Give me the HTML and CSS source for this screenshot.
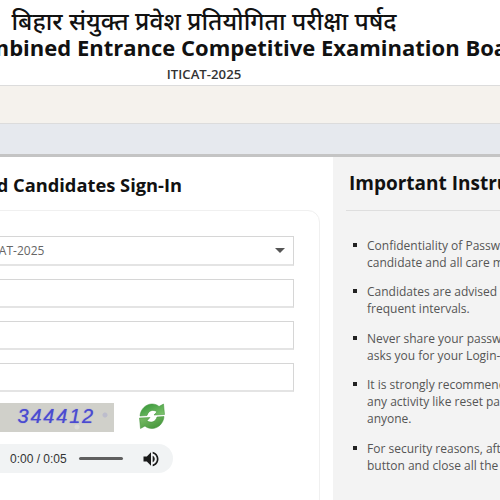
FILE: index.html
```html
<!DOCTYPE html>
<html lang="en">
<head>
    <meta charset="UTF-8">
    <meta name="viewport" content="width=device-width, initial-scale=1.0">
    <title>ITICAT-2025 Sign-In</title>
    <link rel="stylesheet" href="styles.css">
</head>
<body>
    <div class="page">
        <header class="header">
            <h1 class="title-hi">बिहार संयुक्त प्रवेश प्रतियोगिता परीक्षा पर्षद</h1>
            <h2 class="title-en">Bihar Combined Entrance Competitive Examination Board</h2>
            <p class="exam-name">ITICAT-2025</p>
        </header>
        <div class="band-top"></div>
        <div class="band-nav"></div>

        <main class="columns">
            <section class="signin">
                <h3 class="signin-title">Registered Candidates Sign-In</h3>
                <form class="card">
                    <div class="select-box">
                        <span class="select-text">ITICAT-2025</span>
                        <span class="select-arrow"></span>
                    </div>
                    <input class="field" type="text">
                    <input class="field" type="password">
                    <input class="field" type="text">
                    <div class="captcha-row">
                        <div class="captcha"><span class="captcha-text">344412</span></div>
                        <svg class="refresh" viewBox="0 0 26 26" width="26" height="26">
                            <defs>
                                <linearGradient id="arrowTop" x1="0" y1="0" x2="1" y2="1">
                                    <stop offset="0" stop-color="#2f9233"/>
                                    <stop offset="1" stop-color="#86c873"/>
                                </linearGradient>
                                <linearGradient id="arrowBottom" x1="0" y1="0" x2="1" y2="1">
                                    <stop offset="0" stop-color="#7dc06a"/>
                                    <stop offset="1" stop-color="#3d8f34"/>
                                </linearGradient>
                            </defs>
                            <path d="M1 13 C1.500 6 7 1 13 1 C16 1 18.500 2 20 3.500 L24.500 1 L25.500 11.500 L15 12 L18 8.800 C14 6 9.500 7.500 8 12.500 Z" fill="url(#arrowTop)" stroke="#3a8f33" stroke-width="0.5"/>
                            <path d="M25 13.500 C24.500 20.500 19 25.500 13 25.500 C10 25.500 7.500 24.500 6 23 L1.500 25.500 L0.500 15 L11 14.500 L8 17.700 C12 20.500 16.500 19 18 14 Z" fill="url(#arrowBottom)" stroke="#3a8f33" stroke-width="0.5"/>
                        </svg>
                    </div>
                    <div class="player">
                        <span class="player-time">0:00 / 0:05</span>
                        <span class="player-track"></span>
                        <svg class="player-volume" viewBox="0 0 24 24" width="20" height="20">
                            <path d="M3 9v6h4l5 5V4L7 9H3zm13.500 3c0-1.800-1-3.300-2.500-4v8c1.500-.7 2.500-2.200 2.500-4zM14 3.200v2.100c2.900.9 5 3.500 5 6.700s-2.100 5.800-5 6.700v2.100c4-.9 7-4.500 7-8.800s-3-7.900-7-8.800z" fill="#1a1a1a"/>
                        </svg>
                    </div>
                </form>
            </section>

            <aside class="notes">
                <h3 class="notes-title">Important Instructions</h3>
                <hr class="notes-rule">
                <ul class="notes-list">
                    <li>Confidentiality of Password is solely the responsibility of the<br>candidate and all care must be taken to protect the password.</li>
                    <li>Candidates are advised to keep changing their Password at<br>frequent intervals.</li>
                    <li>Never share your password and do not respond to any mail which<br>asks you for your Login-ID and Password.</li>
                    <li>It is strongly recommended that you do not allow anyone to do<br>any activity like reset password on your behalf or share it with<br>anyone.</li>
                    <li>For security reasons, after finishing your work, click the Logout<br>button and close all the windows related to your session.</li>
                </ul>
            </aside>
        </main>
    </div>
</body>
</html>
```

FILE: styles.css
```css
html, body {
    margin: 0;
    height: 500px;
    overflow: hidden;
    background-color: white;
}
body {
    font-family: "Open Sans", sans-serif;
    color: #111;
}
.page {
    width: 1100px;
    margin-left: -200px;
}

/* header */
.header {
    width: 808px;
    height: 85px;
    text-align: center;
    white-space: nowrap;
}
.title-hi {
    margin: 0;
    padding-top: 6px;
    font-family: "Noto Sans", "Open Sans", sans-serif;
    font-size: 24.600px;
    font-weight: 500;
    line-height: 29px;
}
.title-en {
    margin: 0;
    padding-left: 18px;
    font-size: 22px;
    font-weight: 700;
    line-height: 24px;
}
.exam-name {
    margin: 6px 0 0;
    font-size: 13.200px;
    font-weight: 600;
    line-height: 18px;
    color: #333;
}
.band-top {
    height: 37px;
    background-color: #f5f2ed;
    border-top: 1px solid #dcdcdc;
}
.band-nav {
    height: 30px;
    background-color: #e6e9ee;
    border-top: 1px solid #dcdcdc;
    border-bottom: 3px solid #c4c4c4;
}

.columns {
    display: grid;
    grid-template-columns: 533px 567px;
    height: 343px;
}

/* sign-in */
.signin {
    padding-top: 16px;
}
.signin-title {
    margin: 0;
    text-align: right;
    padding-right: 151px;
    font-size: 18.300px;
    font-weight: 700;
    line-height: 24px;
}
.card {
    box-sizing: border-box;
    width: 400px;
    height: 320px;
    margin: 13px 0 0 120px;
    padding: 25px 25px 0 26px;
    border: 1px solid #f0f0f0;
    border-radius: 12px;
}
.select-box {
    box-sizing: border-box;
    height: 30px;
    padding: 0 8px 0 12px;
    display: flex;
    align-items: center;
    justify-content: space-between;
    border: 1px solid #d6d6d6;
    border-bottom: 2px solid #e4e4e4;
}
.select-text {
    font-size: 12px;
    color: #666;
    padding-left: 18px;
}
.select-arrow {
    width: 0;
    height: 0;
    border-left: 5px solid transparent;
    border-right: 5px solid transparent;
    border-top: 5px solid #555;
}
.field {
    display: block;
    box-sizing: border-box;
    width: 100%;
    height: 29px;
    margin: 13px 0 0;
    padding: 0 12px;
    border: 1px solid #d6d6d6;
    border-bottom: 2px solid #e4e4e4;
    border-radius: 0;
    background: white;
}
.captcha-row {
    display: flex;
    align-items: flex-start;
    margin-top: 11px;
}
.captcha {
    width: 167px;
    height: 29px;
    background-color: #d0d0ca;
    background-image:
        radial-gradient(circle at 30px 20px, #bdbdcc 1px, transparent 2px),
        radial-gradient(circle at 158px 12px, #bdbdcc 2px, transparent 3px),
        radial-gradient(circle at 130px 24px, #dcdcd6 2px, transparent 3px);
    text-align: right;
    line-height: 27px;
}
.captcha-text {
    display: inline-block;
    margin-right: 19px;
    font-family: "Liberation Sans", sans-serif;
    font-size: 20px;
    font-style: italic;
    letter-spacing: 1.800px;
    color: #4a4ad0;
    text-shadow: 0 0 1px #6a6ad8;
}
.refresh {
    margin-left: 25px;
}
.player {
    box-sizing: border-box;
    display: flex;
    align-items: center;
    width: 226px;
    height: 29px;
    margin-top: 12px;
    padding-left: 63px;
    background-color: #f1f3f4;
    border-radius: 15px;
}
.player-time {
    font-family: "Liberation Sans", Arial, sans-serif;
    font-size: 12px;
    color: #333;
    white-space: nowrap;
}
.player-track {
    width: 44px;
    height: 3px;
    margin-left: 12px;
    background-color: #5f5f5f;
    border-radius: 2px;
}
.player-volume {
    margin-left: 18px;
}

/* instructions */
.notes {
    background-color: #f3f3f3;
    padding: 13px 0 0 13px;
    white-space: nowrap;
}
.notes-title {
    margin: 0 0 0 3px;
    font-size: 19px;
    font-weight: 700;
    line-height: 26px;
}
.notes-rule {
    margin: 14px 0 0;
    border: 0;
    border-top: 1px solid #dedede;
}
.notes-list {
    margin: 26px 0 0;
    padding: 0 0 0 21px;
    list-style: none;
    font-size: 12px;
    line-height: 17px;
    color: #555;
}
.notes-list li {
    position: relative;
    margin-bottom: 12.400px;
}
.notes-list li::before {
    content: "";
    position: absolute;
    left: -14px;
    top: 6px;
    width: 4px;
    height: 4px;
    background-color: #222;
}
```
